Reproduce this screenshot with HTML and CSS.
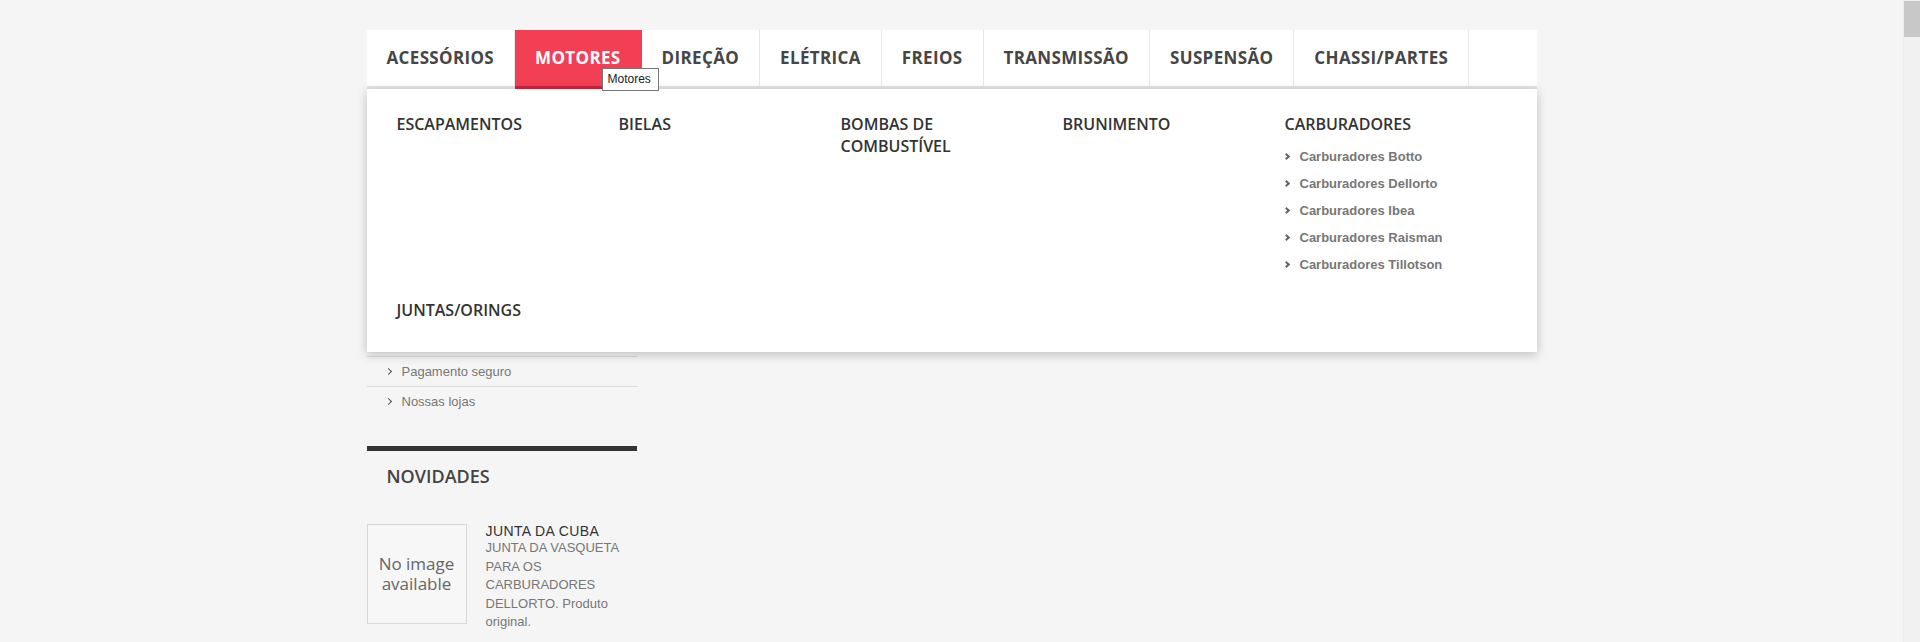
FILE: index.html
```html
<!DOCTYPE html>
<html lang="pt-BR">
<head>
    <meta charset="UTF-8">
    <meta name="viewport" content="width=device-width, initial-scale=1.0">
    <title>Motores</title>
    <link rel="stylesheet" href="styles.css">
</head>
<body>
    <div class="page">
        <div class="container">
            <nav class="menu">
                <ul class="tabs">
                    <li><a href="#">Acessórios</a></li>
                    <li class="active"><a href="#">Motores</a></li>
                    <li><a href="#">Direção</a></li>
                    <li><a href="#">Elétrica</a></li>
                    <li><a href="#">Freios</a></li>
                    <li><a href="#">Transmissão</a></li>
                    <li><a href="#">Suspensão</a></li>
                    <li><a href="#">Chassi/Partes</a></li>
                </ul>
                <span class="tooltip">Motores</span>
                <div class="dropdown">
                    <div class="dd-col"><h3>Escapamentos</h3></div>
                    <div class="dd-col"><h3>Bielas</h3></div>
                    <div class="dd-col"><h3>Bombas de Combustível</h3></div>
                    <div class="dd-col"><h3>Brunimento</h3></div>
                    <div class="dd-col">
                        <h3>Carburadores</h3>
                        <ul class="dd-links">
                            <li><a href="#">Carburadores Botto</a></li>
                            <li><a href="#">Carburadores Dellorto</a></li>
                            <li><a href="#">Carburadores Ibea</a></li>
                            <li><a href="#">Carburadores Raisman</a></li>
                            <li><a href="#">Carburadores Tillotson</a></li>
                        </ul>
                    </div>
                    <div class="dd-col"><h3>Juntas/Orings</h3></div>
                </div>
            </nav>

            <div class="columns">
                <aside class="sidebar">
                    <ul class="block-links">
                        <li><a href="#">Pagamento seguro</a></li>
                        <li><a href="#">Nossas lojas</a></li>
                    </ul>
                    <section class="block">
                        <h4>Novidades</h4>
                        <div class="product">
                            <div class="product-img">
                                <span>No image</span>
                                <span>available</span>
                            </div>
                            <div class="product-info">
                                <h5>JUNTA DA CUBA</h5>
                                <p>JUNTA DA VASQUETA PARA OS CARBURADORES DELLORTO. Produto original.</p>
                            </div>
                        </div>
                    </section>
                </aside>
                <div class="center"></div>
            </div>
        </div>
    </div>
    <div class="scrollbar"><div class="thumb"></div></div>
</body>
</html>
```

FILE: styles.css
```css
html, body {
    height: 100%;
}

body {
    margin: 0;
    display: flex;
    overflow: hidden;
    background-color: #f5f5f5;
    font-family: "Liberation Sans", Arial, sans-serif;
    font-size: 13px;
    color: #777;
}

ul {
    list-style: none;
    margin: 0;
    padding: 0;
}

a {
    text-decoration: none;
    color: inherit;
}

.page {
    flex: 1;
    min-width: 0;
}

.container {
    width: 1170px;
    margin: 30px auto 0;
}

/* top menu */
.menu {
    position: relative;
}

.tabs {
    display: flex;
    background-color: #fff;
    border-bottom: 3px solid #e3e3e3;
}

.tabs a {
    display: block;
    height: 56px;
    line-height: 56px;
    padding: 0 20px;
    border-right: 1px solid #e9e9e9;
    font-family: "Open Sans", sans-serif;
    font-weight: 700;
    font-size: 17px;
    letter-spacing: 0.35px;
    color: #464646;
    text-transform: uppercase;
}

.tabs .active a {
    background-color: #f33f53;
    color: #fff;
    border-right-color: #f33f53;
    border-bottom: 3px solid #c8263a;
    margin-bottom: -3px;
}

.tooltip {
    position: absolute;
    left: 235px;
    top: 38px;
    z-index: 3;
    box-sizing: border-box;
    width: 57px;
    height: 23px;
    padding-left: 5px;
    line-height: 21px;
    border: 1px solid #767676;
    background-color: #fff;
    font-size: 12px;
    color: #222;
}

.dropdown {
    position: absolute;
    top: 100%;
    left: 0;
    right: 0;
    z-index: 2;
    display: grid;
    grid-template-columns: repeat(5, 222px);
    row-gap: 21px;
    padding: 24px 30px 31px;
    background-color: #fff;
    box-shadow: 0 3px 10px rgba(0, 0, 0, 0.22);
}

.dd-col {
    padding-right: 30px;
}

.dd-col h3 {
    margin: 0;
    font-family: "Open Sans", sans-serif;
    font-weight: 600;
    font-size: 16px;
    line-height: 22px;
    color: #333;
    text-transform: uppercase;
}

.dd-links {
    margin-top: 8px;
}

.dd-links a {
    display: block;
    line-height: 27px;
    font-weight: bold;
    color: #777;
}

.dd-links a::before,
.block-links a::before {
    content: "";
    display: inline-block;
    width: 3px;
    height: 3px;
    border-top: 2px solid #666;
    border-right: 2px solid #666;
    transform: rotate(45deg);
    vertical-align: 2px;
    margin: 0 11px 0 -1px;
}

/* left column */
.columns {
    display: flex;
}

.sidebar {
    width: 270px;
}

.center {
    flex: 1;
}

/* links of the block hidden under the dropdown */
.block-links {
    margin-top: 267px;
}

.block-links li {
    border-top: 1px solid #dcdcdc;
}

.block-links a {
    display: block;
    line-height: 29px;
    padding-left: 19px;
    color: #777;
}

.block-links a::before {
    border-width: 1px 1px 0 0;
    border-color: #555;
    width: 4px;
    height: 4px;
    margin: 0 11px 0 0;
}

.block {
    margin-top: 30px;
    border-top: 5px solid #333;
}

.block h4 {
    margin: 0;
    padding: 13px 20px 15px;
    font-family: "Open Sans", sans-serif;
    font-weight: 600;
    font-size: 18px;
    line-height: 24px;
    color: #444;
    text-transform: uppercase;
}

.product {
    display: flex;
    margin-top: 21px;
}

.product-img {
    width: 98px;
    height: 98px;
    border: 1px solid #d6d6d6;
    background-color: #f7f7f7;
    display: flex;
    flex-direction: column;
    align-items: center;
    justify-content: center;
    font-family: "Open Sans", sans-serif;
    font-size: 17px;
    line-height: 20px;
    color: #666;
}

.product-info {
    width: 151px;
    margin-left: 19px;
}

.product-info h5 {
    margin: -3px 0 -2px;
    font-size: 14px;
    font-weight: normal;
    letter-spacing: 0.4px;
    line-height: 20px;
    color: #333;
}

.product-info p {
    margin: 0;
    line-height: 1.428571;
}

/* fake browser scrollbar */
.scrollbar {
    width: 16px;
    border-left: 1px solid #ececec;
    background-color: #f1f1f1;
}

.thumb {
    height: 36px;
    margin-top: 1px;
    background-color: #c8c8c8;
}
```
